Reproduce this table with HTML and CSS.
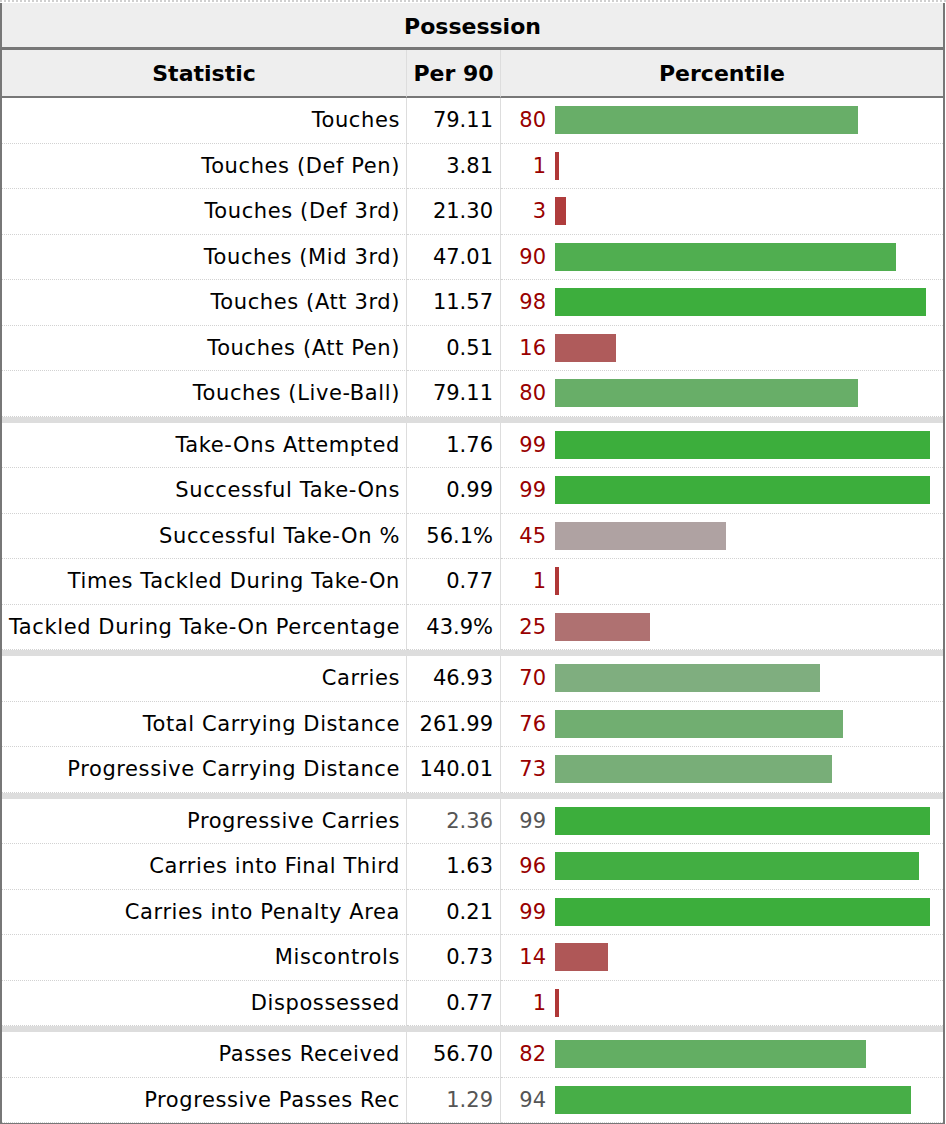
FILE: index.html
```html
<!DOCTYPE html>
<html lang="en">
<head>
<meta charset="utf-8">
<title>Possession</title>
<link rel="stylesheet" href="styles.css">
</head>
<body>
<div class="topline"></div>
<table class="stats">
  <colgroup>
    <col class="col-stat">
    <col class="col-val">
    <col class="col-pct">
  </colgroup>
  <thead>
    <tr class="title"><th colspan="3">Possession</th></tr>
    <tr class="cols"><th class="c-stat">Statistic</th><th class="c-val">Per 90</th><th class="c-pct">Percentile</th></tr>
  </thead>
  <tbody>
    <tr><td class="stat">Touches</td><td class="val">79.11</td><td class="pct"><div class="pw"><span class="pnum">80</span><span class="bar" style="width:303px;background:rgb(104,174,104)"></span></div></td></tr>
    <tr><td class="stat">Touches (Def Pen)</td><td class="val">3.81</td><td class="pct"><div class="pw"><span class="pnum">1</span><span class="bar" style="width:4px;background:rgb(175,55,55)"></span></div></td></tr>
    <tr><td class="stat">Touches (Def 3rd)</td><td class="val">21.30</td><td class="pct"><div class="pw"><span class="pnum">3</span><span class="bar" style="width:11px;background:rgb(175,60,60)"></span></div></td></tr>
    <tr><td class="stat">Touches (Mid 3rd)</td><td class="val">47.01</td><td class="pct"><div class="pw"><span class="pnum">90</span><span class="bar" style="width:341px;background:rgb(80,174,80)"></span></div></td></tr>
    <tr><td class="stat">Touches (Att 3rd)</td><td class="val">11.57</td><td class="pct"><div class="pw"><span class="pnum">98</span><span class="bar" style="width:371px;background:rgb(61,174,61)"></span></div></td></tr>
    <tr><td class="stat">Touches (Att Pen)</td><td class="val">0.51</td><td class="pct"><div class="pw"><span class="pnum">16</span><span class="bar" style="width:61px;background:rgb(175,91,91)"></span></div></td></tr>
    <tr><td class="stat">Touches (Live-Ball)</td><td class="val">79.11</td><td class="pct"><div class="pw"><span class="pnum">80</span><span class="bar" style="width:303px;background:rgb(104,174,104)"></span></div></td></tr>

    <tr class="grp"><td class="stat">Take-Ons Attempted</td><td class="val">1.76</td><td class="pct"><div class="pw"><span class="pnum">99</span><span class="bar" style="width:375px;background:rgb(60,174,60)"></span></div></td></tr>
    <tr><td class="stat">Successful Take-Ons</td><td class="val">0.99</td><td class="pct"><div class="pw"><span class="pnum">99</span><span class="bar" style="width:375px;background:rgb(60,174,60)"></span></div></td></tr>
    <tr><td class="stat">Successful Take-On %</td><td class="val">56.1%</td><td class="pct"><div class="pw"><span class="pnum">45</span><span class="bar" style="width:171px;background:rgb(175,162,162)"></span></div></td></tr>
    <tr><td class="stat">Times Tackled During Take-On</td><td class="val">0.77</td><td class="pct"><div class="pw"><span class="pnum">1</span><span class="bar" style="width:4px;background:rgb(175,55,55)"></span></div></td></tr>
    <tr><td class="stat">Tackled During Take-On Percentage</td><td class="val">43.9%</td><td class="pct"><div class="pw"><span class="pnum">25</span><span class="bar" style="width:95px;background:rgb(175,113,113)"></span></div></td></tr>

    <tr class="grp"><td class="stat">Carries</td><td class="val">46.93</td><td class="pct"><div class="pw"><span class="pnum">70</span><span class="bar" style="width:265px;background:rgb(127,174,127)"></span></div></td></tr>
    <tr><td class="stat">Total Carrying Distance</td><td class="val">261.99</td><td class="pct"><div class="pw"><span class="pnum">76</span><span class="bar" style="width:288px;background:rgb(113,174,113)"></span></div></td></tr>
    <tr><td class="stat">Progressive Carrying Distance</td><td class="val">140.01</td><td class="pct"><div class="pw"><span class="pnum">73</span><span class="bar" style="width:277px;background:rgb(120,174,120)"></span></div></td></tr>

    <tr class="grp muted"><td class="stat">Progressive Carries</td><td class="val">2.36</td><td class="pct"><div class="pw"><span class="pnum">99</span><span class="bar" style="width:375px;background:rgb(60,174,60)"></span></div></td></tr>
    <tr><td class="stat">Carries into Final Third</td><td class="val">1.63</td><td class="pct"><div class="pw"><span class="pnum">96</span><span class="bar" style="width:364px;background:rgb(66,174,66)"></span></div></td></tr>
    <tr><td class="stat">Carries into Penalty Area</td><td class="val">0.21</td><td class="pct"><div class="pw"><span class="pnum">99</span><span class="bar" style="width:375px;background:rgb(60,174,60)"></span></div></td></tr>
    <tr><td class="stat">Miscontrols</td><td class="val">0.73</td><td class="pct"><div class="pw"><span class="pnum">14</span><span class="bar" style="width:53px;background:rgb(175,87,87)"></span></div></td></tr>
    <tr><td class="stat">Dispossessed</td><td class="val">0.77</td><td class="pct"><div class="pw"><span class="pnum">1</span><span class="bar" style="width:4px;background:rgb(175,55,55)"></span></div></td></tr>

    <tr class="grp"><td class="stat">Passes Received</td><td class="val">56.70</td><td class="pct"><div class="pw"><span class="pnum">82</span><span class="bar" style="width:311px;background:rgb(99,174,99)"></span></div></td></tr>
    <tr class="muted"><td class="stat">Progressive Passes Rec</td><td class="val">1.29</td><td class="pct"><div class="pw"><span class="pnum">94</span><span class="bar" style="width:356px;background:rgb(71,174,71)"></span></div></td></tr>
  </tbody>
</table>
</body>
</html>
```
FILE: styles.css
```css
html, body {
  margin: 0;
  padding: 0;
  background: #fff;
}

body {
  font-family: "DejaVu Sans", Verdana, sans-serif;
  font-size: 21px;
  color: #000;
}

.topline {
  height: 0;
  border-top: 2px dotted #cfcfcf;
  margin-bottom: 1px;
}

.stats {
  width: 945px;
  table-layout: fixed;
  border-collapse: separate;
  border-spacing: 0;
  border-left: 2px solid #777;
  border-right: 2px solid #777;
  border-bottom: 2px solid #777;
}

.col-stat { width: 405px; }
.col-val { width: 94px; }

.stats th {
  background: #eee;
  font-weight: bold;
  font-size: 22px;
  padding: 0;
  text-align: center;
  box-sizing: border-box;
}

.title th {
  height: 47px;
  padding-top: 2px;
  border-bottom: 3px solid #777;
}

.cols th {
  height: 48px;
  padding-top: 1px;
  border-bottom: 2px solid #777;
}

.cols .c-stat,
.cols .c-val {
  border-right: 1px solid #ddd;
}

.stats td {
  box-sizing: border-box;
  height: 45.5px;
  padding: 0;
  border-bottom: 1px dotted #d2d2d2;
  white-space: nowrap;
  vertical-align: middle;
}

.stats .grp td {
  height: 51.5px;
  border-top: 6px solid #ddd;
}

.stat {
  text-align: right;
  letter-spacing: 0.6px;
  padding-right: 6px !important;
  border-right: 1px solid #ddd;
}

.val {
  text-align: right;
  padding-right: 7px !important;
  border-right: 1px solid #ddd;
}

.pw {
  display: flex;
  align-items: center;
}

.pnum {
  width: 45px;
  text-align: right;
  color: #990000;
}

.bar {
  display: block;
  height: 28px;
  margin-left: 9px;
}

.muted .val,
.muted .pnum {
  color: #555;
}
```
